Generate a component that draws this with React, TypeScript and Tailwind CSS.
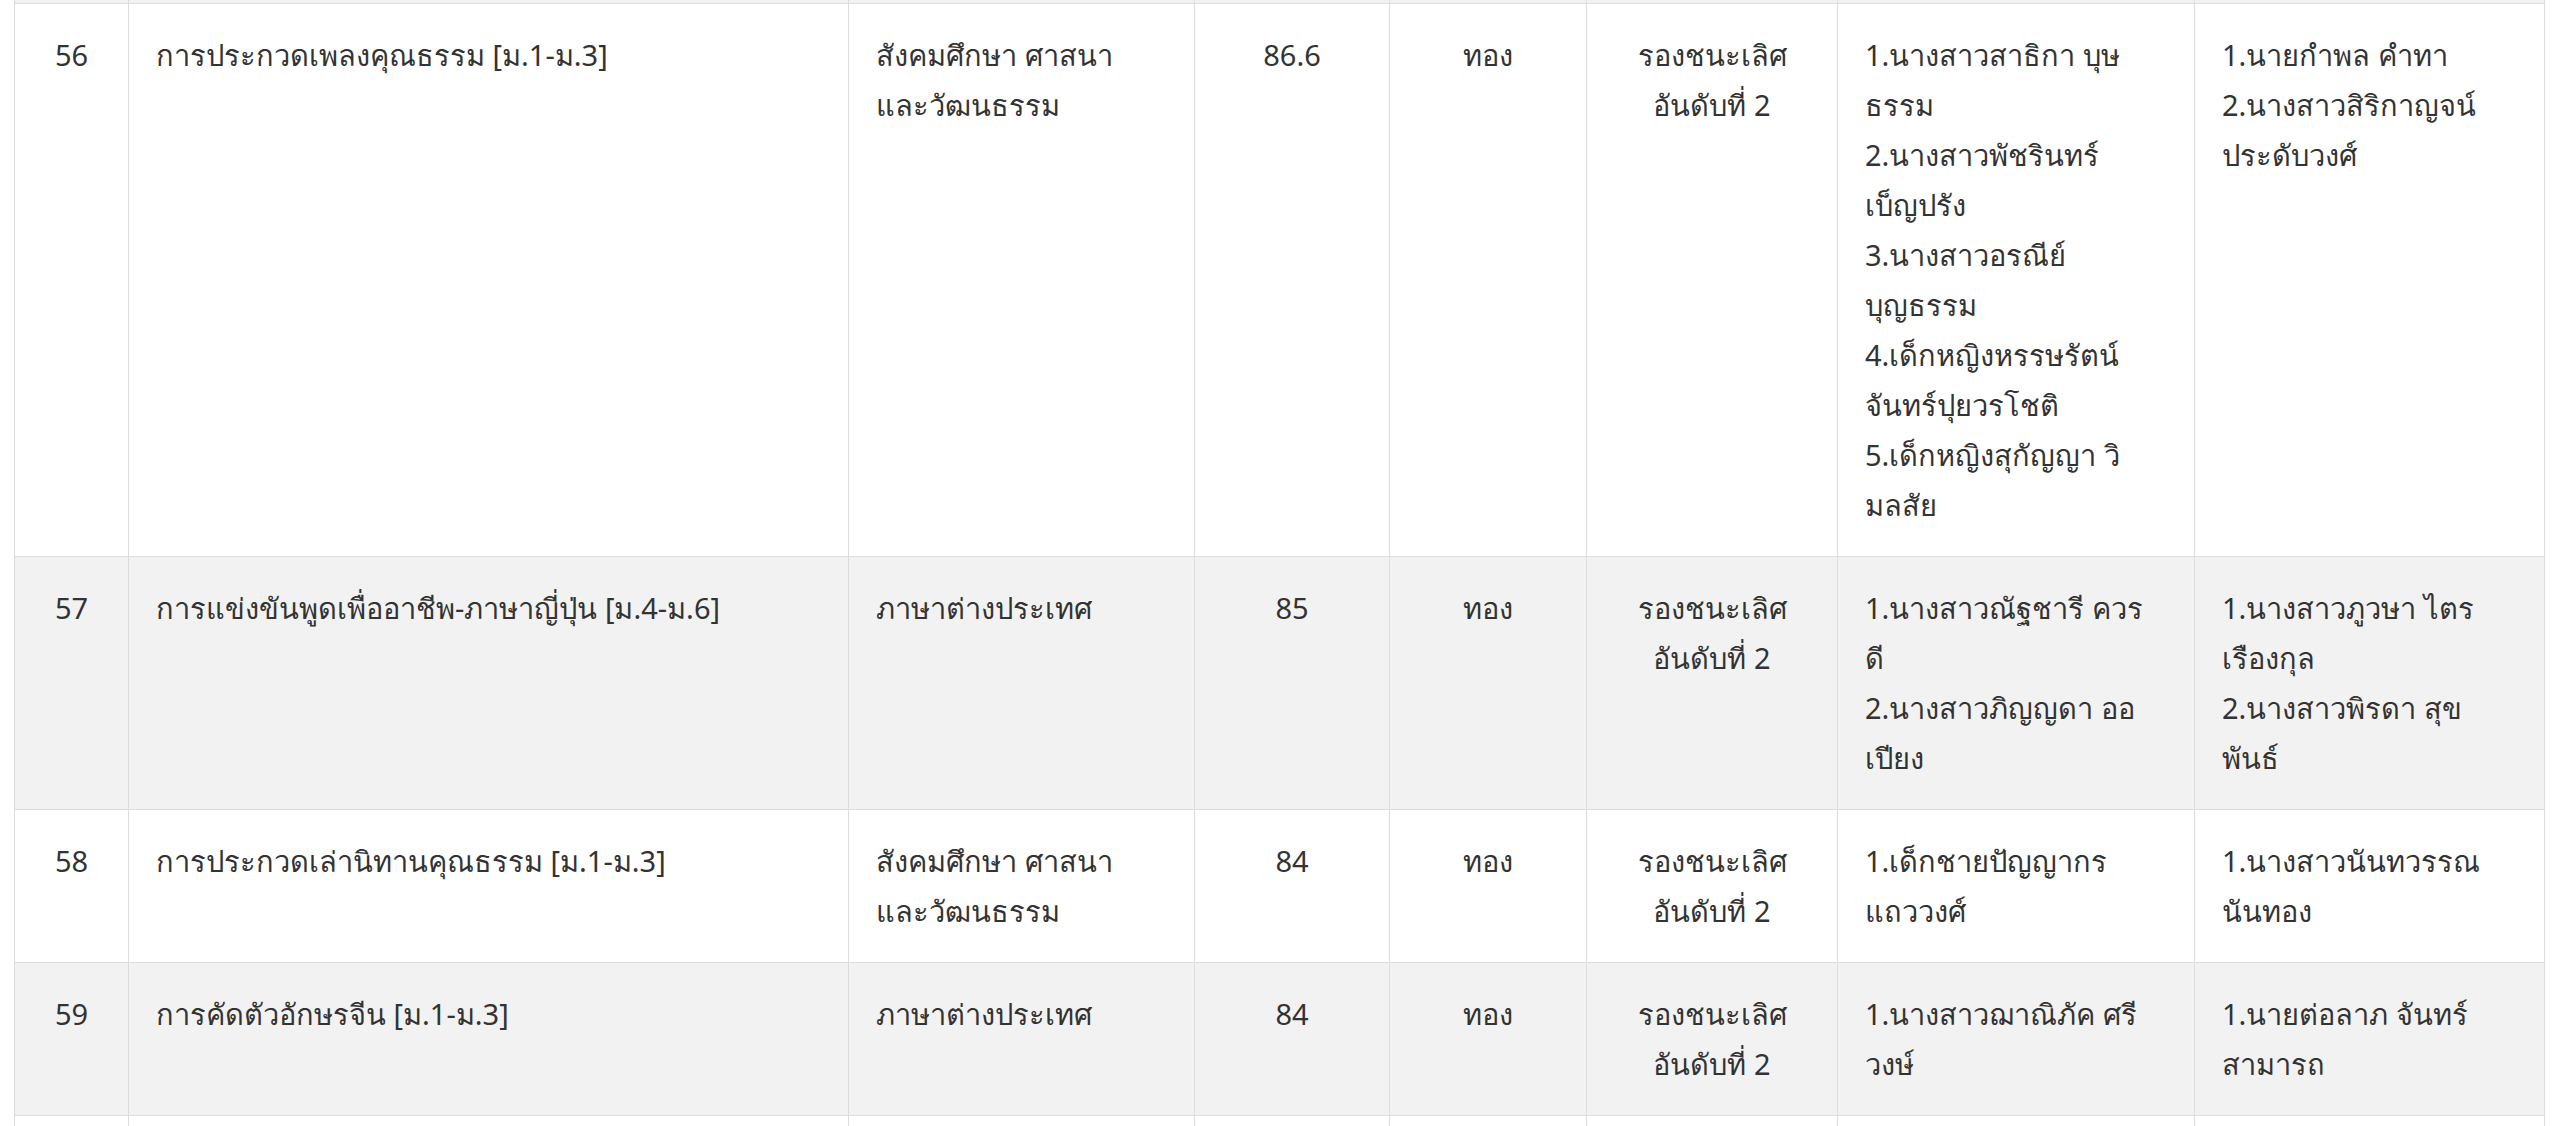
import React from "react";

type Row = {
    no: number;
    title: string;
    group: string[];
    score: string;
    medal: string;
    rank: string[];
    students: string[];
    teachers: string[];
};

const rows: Row[] = [
    {
        no: 56,
        title: "การประกวดเพลงคุณธรรม [ม.1-ม.3]",
        group: ["สังคมศึกษา ศาสนา", "และวัฒนธรรม"],
        score: "86.6",
        medal: "ทอง",
        rank: ["รองชนะเลิศ", "อันดับที่ 2"],
        students: [
            "1.นางสาวสาธิกา บุษ",
            "ธรรม",
            "2.นางสาวพัชรินทร์",
            "เบ็ญปรัง",
            "3.นางสาวอรณีย์",
            "บุญธรรม",
            "4.เด็กหญิงหรรษรัตน์",
            "จันทร์ปุยวรโชติ",
            "5.เด็กหญิงสุกัญญา วิ",
            "มลสัย",
        ],
        teachers: ["1.นายกำพล คำทา", "2.นางสาวสิริกาญจน์", "ประดับวงศ์"],
    },
    {
        no: 57,
        title: "การแข่งขันพูดเพื่ออาชีพ-ภาษาญี่ปุ่น [ม.4-ม.6]",
        group: ["ภาษาต่างประเทศ"],
        score: "85",
        medal: "ทอง",
        rank: ["รองชนะเลิศ", "อันดับที่ 2"],
        students: [
            "1.นางสาวณัฐชารี ควร",
            "ดี",
            "2.นางสาวภิญญดา ออ",
            "เปียง",
        ],
        teachers: ["1.นางสาวภูวษา ไตร", "เรืองกุล", "2.นางสาวพิรดา สุข", "พันธ์"],
    },
    {
        no: 58,
        title: "การประกวดเล่านิทานคุณธรรม [ม.1-ม.3]",
        group: ["สังคมศึกษา ศาสนา", "และวัฒนธรรม"],
        score: "84",
        medal: "ทอง",
        rank: ["รองชนะเลิศ", "อันดับที่ 2"],
        students: ["1.เด็กชายปัญญากร", "แถววงศ์"],
        teachers: ["1.นางสาวนันทวรรณ", "นันทอง"],
    },
    {
        no: 59,
        title: "การคัดตัวอักษรจีน [ม.1-ม.3]",
        group: ["ภาษาต่างประเทศ"],
        score: "84",
        medal: "ทอง",
        rank: ["รองชนะเลิศ", "อันดับที่ 2"],
        students: ["1.นางสาวฌาณิภัค ศรี", "วงษ์"],
        teachers: ["1.นายต่อลาภ จันทร์", "สามารถ"],
    },
];

const cell = "border border-[#dddddd] px-[27px] py-[26px] align-top";

function Lines({ items }: { items: string[] }) {
    return (
        <>
            {items.map((t, i) => (
                <div key={i} className="whitespace-nowrap">
                    {t}
                </div>
            ))}
        </>
    );
}

export default function App() {
    return (
        <main
            className="h-[1126px] w-[2560px] overflow-hidden bg-white pl-[14px] pr-[17px] text-[#333333] text-[29px] leading-[50px]"
            style={{ fontFamily: '"Noto Sans", "Open Sans", sans-serif' }}
        >
            <table className="-mt-[1px] w-[2530px] table-fixed border-collapse">
                <colgroup>
                    <col className="w-[114px]" />
                    <col className="w-[720px]" />
                    <col className="w-[346px]" />
                    <col className="w-[195px]" />
                    <col className="w-[197px]" />
                    <col className="w-[251px]" />
                    <col className="w-[357px]" />
                    <col className="w-[350px]" />
                </colgroup>
                <tbody>
                    {/* tail of the previous row, scrolled off the top */}
                    <tr className="h-[4px] bg-[#f2f2f2]">
                        {Array.from({ length: 8 }).map((_, i) => (
                            <td key={i} className="border border-[#dddddd] p-0"></td>
                        ))}
                    </tr>
                    {rows.map((r, idx) => (
                        <tr
                            key={r.no}
                            className={idx % 2 === 1 ? "bg-[#f2f2f2]" : "bg-white"}
                        >
                            <td className={`${cell} text-center`}>{r.no}</td>
                            <td className={cell}>{r.title}</td>
                            <td className={cell}>
                                <Lines items={r.group} />
                            </td>
                            <td className={`${cell} text-center`}>{r.score}</td>
                            <td className={`${cell} text-center`}>{r.medal}</td>
                            <td className={`${cell} text-center`}>
                                <Lines items={r.rank} />
                            </td>
                            <td className={cell}>
                                <Lines items={r.students} />
                            </td>
                            <td className={cell}>
                                <Lines items={r.teachers} />
                            </td>
                        </tr>
                    ))}
                    {/* next row, cut off by the bottom of the window */}
                    <tr className="bg-white">
                        {Array.from({ length: 8 }).map((_, i) => (
                            <td key={i} className={cell}>
                                &nbsp;
                            </td>
                        ))}
                    </tr>
                </tbody>
            </table>
        </main>
    );
}
